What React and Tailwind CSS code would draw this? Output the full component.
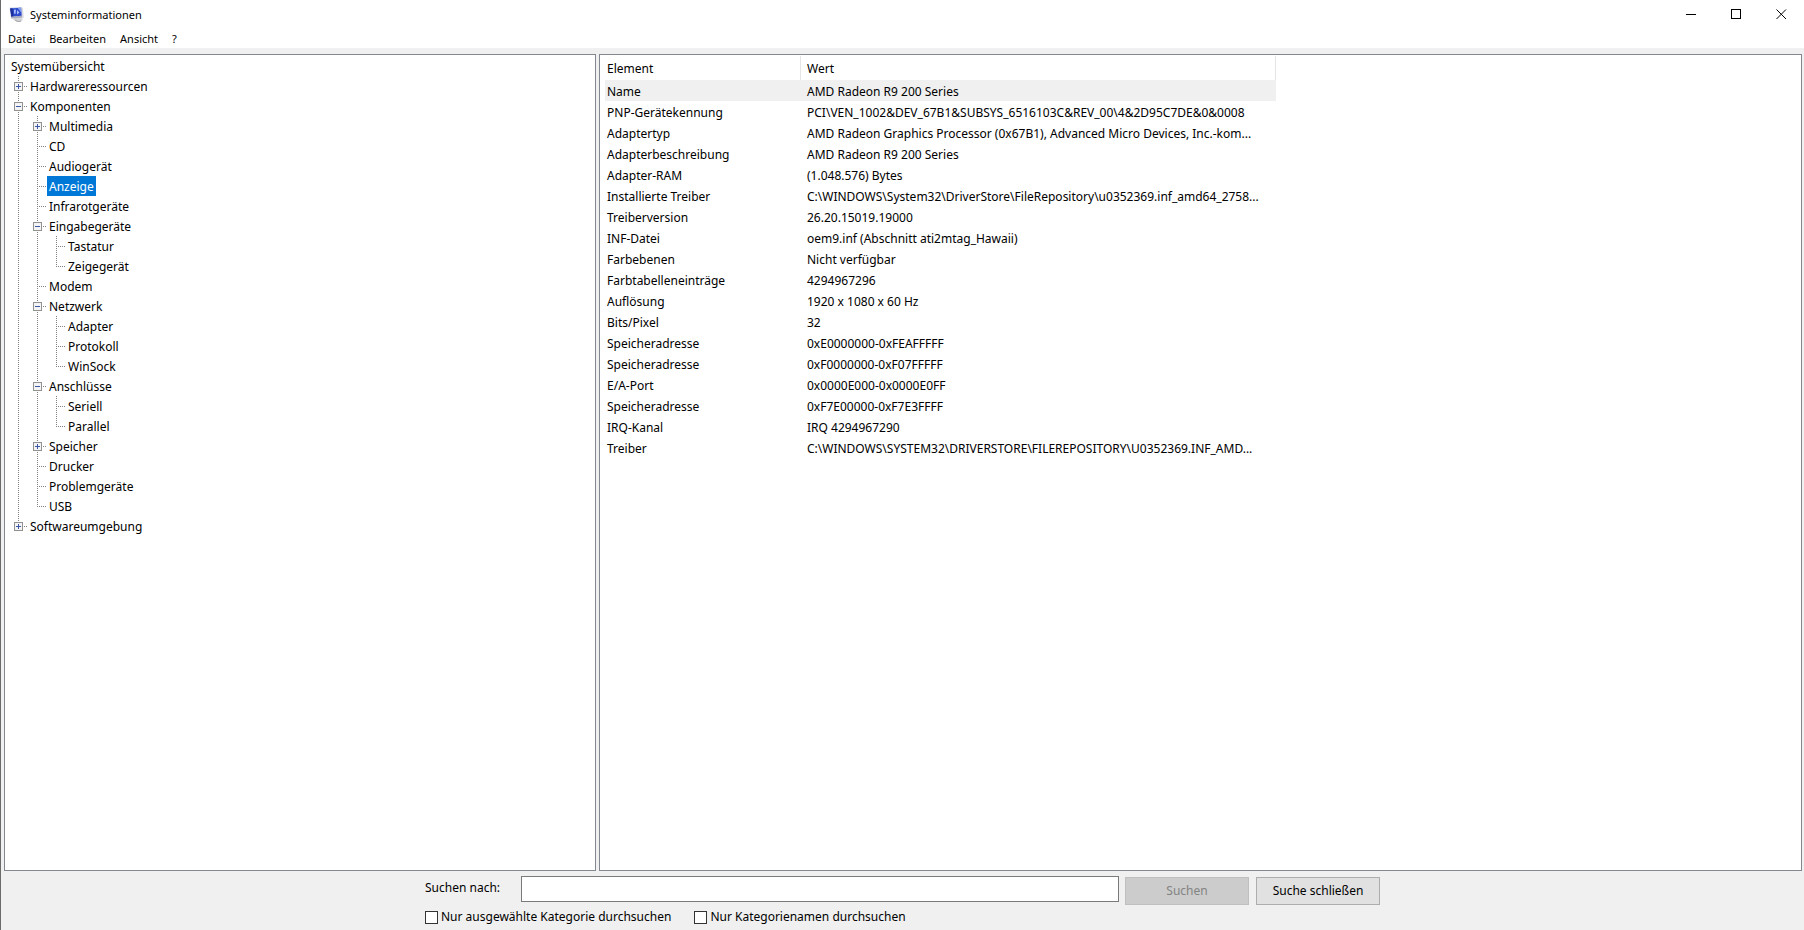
import React, { useState } from "react";

const tree = [
  { name: "Hardwareressourcen", state: "closed" },
  {
    name: "Komponenten",
    state: "open",
    children: [
      { name: "Multimedia", state: "closed" },
      { name: "CD" },
      { name: "Audiogerät" },
      { name: "Anzeige" },
      { name: "Infrarotgeräte" },
      {
        name: "Eingabegeräte",
        state: "open",
        children: [{ name: "Tastatur" }, { name: "Zeigegerät" }],
      },
      { name: "Modem" },
      {
        name: "Netzwerk",
        state: "open",
        children: [
          { name: "Adapter" },
          { name: "Protokoll" },
          { name: "WinSock" },
        ],
      },
      {
        name: "Anschlüsse",
        state: "open",
        children: [{ name: "Seriell" }, { name: "Parallel" }],
      },
      { name: "Speicher", state: "closed" },
      { name: "Drucker" },
      { name: "Problemgeräte" },
      { name: "USB" },
    ],
  },
  { name: "Softwareumgebung", state: "closed" },
];

const details = [
  ["Name", "AMD Radeon R9 200 Series"],
  [
    "PNP-Gerätekennung",
    "PCI\\VEN_1002&DEV_67B1&SUBSYS_6516103C&REV_00\\4&2D95C7DE&0&0008",
  ],
  [
    "Adaptertyp",
    "AMD Radeon Graphics Processor (0x67B1), Advanced Micro Devices, Inc.-kom...",
  ],
  ["Adapterbeschreibung", "AMD Radeon R9 200 Series"],
  ["Adapter-RAM", "(1.048.576) Bytes"],
  [
    "Installierte Treiber",
    "C:\\WINDOWS\\System32\\DriverStore\\FileRepository\\u0352369.inf_amd64_2758...",
  ],
  ["Treiberversion", "26.20.15019.19000"],
  ["INF-Datei", "oem9.inf (Abschnitt ati2mtag_Hawaii)"],
  ["Farbebenen", "Nicht verfügbar"],
  ["Farbtabelleneinträge", "4294967296"],
  ["Auflösung", "1920 x 1080 x 60 Hz"],
  ["Bits/Pixel", "32"],
  ["Speicheradresse", "0xE0000000-0xFEAFFFFF"],
  ["Speicheradresse", "0xF0000000-0xF07FFFFF"],
  ["E/A-Port", "0x0000E000-0x0000E0FF"],
  ["Speicheradresse", "0xF7E00000-0xF7E3FFFF"],
  ["IRQ-Kanal", "IRQ 4294967290"],
  [
    "Treiber",
    "C:\\WINDOWS\\SYSTEM32\\DRIVERSTORE\\FILEREPOSITORY\\U0352369.INF_AMD...",
  ],
];

const AppIcon = () => (
  <svg width="16" height="16" viewBox="0 0 16 16" aria-hidden="true">
    <path d="M5 11L11 10.500l3 2-2 2-4 .5-4-2.500z" fill="#d2d3d6" />
    <path d="M6 13L9 14.500 12 14.200" fill="none" stroke="#a4a6ac" />
    <path d="M12 0L14 1 14.800 10.500 12.500 12z" fill="#dcdcde" />
    <path d="M.5 .8L12.500 0 13.300 10.500 2 11.500z" fill="#c5cbe4" />
    <path d="M1.200 1.500L12 .8 12.700 8.800 2.300 9.800z" fill="#2b49cc" />
    <path d="M1.200 1.500L3.500 1.300 4.500 9.600 2.300 9.800z" fill="#1b2f96" />
    <path d="M8.500 1L12 .8 12.500 6z" fill="#7f9cf0" />
    <path d="M5 2.800L7 2.500 6.500 7 5 6.500zM8 3l2.500 2.500L8 7.500z" fill="#a9bdf8" />
    <path d="M2.300 9.800L12.700 8.800l.4 1.700L2.500 11.400z" fill="#a6a9b8" />
  </svg>
);

// One 19x20 cell of the tree: dotted guide lines plus the +/- box
const Guide = ({ up, down, branch, state }) => (
  <svg
    width="19"
    height="20"
    viewBox="0 0 19 20"
    fill="none"
    shapeRendering="crispEdges"
    className="block shrink-0"
    aria-hidden="true"
  >
    <g stroke="#808080" strokeDasharray="1 1">
      {up && <path d="M9.500 0V10" />}
      {down && <path d="M9.500 10V20" />}
      {branch && <path d="M9 10.500H18" />}
    </g>
    {state && (
      <g>
        <rect x="5.500" y="6.500" width="8" height="8" fill="#f4f4f4" stroke="#919191" />
        <path d="M7 10.500H12" stroke="#3c56a8" />
        {state === "closed" && <path d="M9.500 8V13" stroke="#3c56a8" />}
      </g>
    )}
  </svg>
);

const TreeLabel = ({ name, selected, onSelect }) => (
  <button
    type="button"
    onClick={() => onSelect(name)}
    className={
      selected === name
        ? "block h-5 bg-[#0078d7] px-[2px] pt-[2px] leading-[18px] text-white"
        : "block h-5 px-[2px] pt-[2px] leading-[18px]"
    }
  >
    {name}
  </button>
);

const TreeNodes = ({ nodes, lines = [], selected, onSelect }) => (
  <ul>
    {nodes.map((node, i) => {
      const last = i === nodes.length - 1;
      return (
        <li key={node.name}>
          <div className="flex">
            {lines.map((line, n) => (
              <Guide key={n} up={line} down={line} />
            ))}
            <Guide up down={!last} branch state={node.state} />
            <TreeLabel name={node.name} selected={selected} onSelect={onSelect} />
          </div>
          {node.children && (
            <TreeNodes
              nodes={node.children}
              lines={[...lines, !last]}
              selected={selected}
              onSelect={onSelect}
            />
          )}
        </li>
      );
    })}
  </ul>
);

const TitleBar = () => (
  <header className="flex h-[30px] items-center bg-white text-[11px]">
    <div className="flex flex-1 items-center gap-[5px] pl-2">
      <AppIcon />
      <h1>Systeminformationen</h1>
    </div>
    <div className="flex h-full">
      <button type="button" aria-label="Minimieren" className="flex w-[45px] items-center justify-center">
        <svg width="11" height="12" stroke="#000" shapeRendering="crispEdges">
          <path d="M0 5.500H10" />
        </svg>
      </button>
      <button type="button" aria-label="Maximieren" className="flex w-[45px] items-center justify-center">
        <svg width="11" height="12" fill="none" stroke="#000" shapeRendering="crispEdges">
          <path d="M.5 .5H9.500V9.500H.5Z" />
        </svg>
      </button>
      <button type="button" aria-label="Schließen" className="flex w-[45px] items-center justify-center">
        <svg width="11" height="12" stroke="#000">
          <path d="M.5 .5L10 10M10 .5L.5 10" />
        </svg>
      </button>
    </div>
  </header>
);

const MenuBar = () => (
  <nav className="flex h-[18px] bg-white text-[11px] leading-[18px]">
    {["Datei", "Bearbeiten", "Ansicht", "?"].map((item) => (
      <button key={item} type="button" className="px-[7px]">
        {item}
      </button>
    ))}
  </nav>
);

const DetailTable = () => (
  <table className="w-[671px] table-fixed border-separate border-spacing-0 text-left leading-[19px]">
    <thead>
      <tr className="h-6">
        <th className="w-[196px] border-r border-[#e5e5e5] pl-[2px] font-normal">
          Element
        </th>
        <th className="border-r border-[#e5e5e5] pl-[6px] font-normal">Wert</th>
      </tr>
    </thead>
    <tbody>
      {details.map(([label, value], i) => (
        <tr key={i} className={i === 0 ? "h-[21px] bg-[#f0f0f0]" : "h-[21px]"}>
          <td className="pt-[2px] pl-[2px]">{label}</td>
          <td className="pt-[2px] pl-[6px] whitespace-nowrap">{value}</td>
        </tr>
      ))}
    </tbody>
  </table>
);

const Check = ({ id, label }) => (
  <div className="flex items-center gap-[3px]">
    <input
      id={id}
      type="checkbox"
      className="size-[13px] appearance-none border border-[#333333] bg-white checked:bg-[#0078d7]"
    />
    <label htmlFor={id}>{label}</label>
  </div>
);

const SearchBar = () => (
  <form
    onSubmit={(e) => e.preventDefault()}
    className="mx-auto flex h-[59px] w-[955px] flex-col pt-[5px]"
  >
    <div className="flex items-start">
      <label htmlFor="search" className="w-24 pt-[2px] leading-5">
        Suchen nach:
      </label>
      <input
        id="search"
        type="text"
        className="h-[26px] flex-1 border border-[#7a7a7a] bg-white px-1 outline-none"
      />
      <button
        type="submit"
        disabled
        className="mt-[1px] ml-[6px] h-7 w-[124px] border border-[#bfbfbf] bg-[#cccccc] text-[#838383]"
      >
        Suchen
      </button>
      <button
        type="button"
        className="mt-[1px] ml-[7px] h-7 w-[124px] border border-[#adadad] bg-[#e1e1e1]"
      >
        Suche schließen
      </button>
    </div>
    <div className="flex gap-[23px] pt-[2px]">
      <Check id="selected-only" label="Nur ausgewählte Kategorie durchsuchen" />
      <Check id="names-only" label="Nur Kategorienamen durchsuchen" />
    </div>
  </form>
);

export default function App() {
  const [selected, setSelected] = useState("Anzeige");

  return (
    <div className="flex min-h-screen flex-col border-l border-[#6b6b6b] bg-[#f0f0f0] font-['Noto_Sans',sans-serif] text-[12px] leading-5 text-black">
      <TitleBar />
      <MenuBar />
      <main className="flex flex-1 gap-[3px] pt-[6px] pr-[2px] pl-[3px]">
        <section className="w-[592px] shrink-0 border border-[#828790] bg-white pt-[1px] pl-1">
          <TreeLabel name="Systemübersicht" selected={selected} onSelect={setSelected} />
          <TreeNodes nodes={tree} selected={selected} onSelect={setSelected} />
        </section>
        <section className="min-w-0 flex-1 border border-[#828790] bg-white pt-[1px] pl-[5px]">
          <DetailTable />
        </section>
      </main>
      <SearchBar />
    </div>
  );
}
